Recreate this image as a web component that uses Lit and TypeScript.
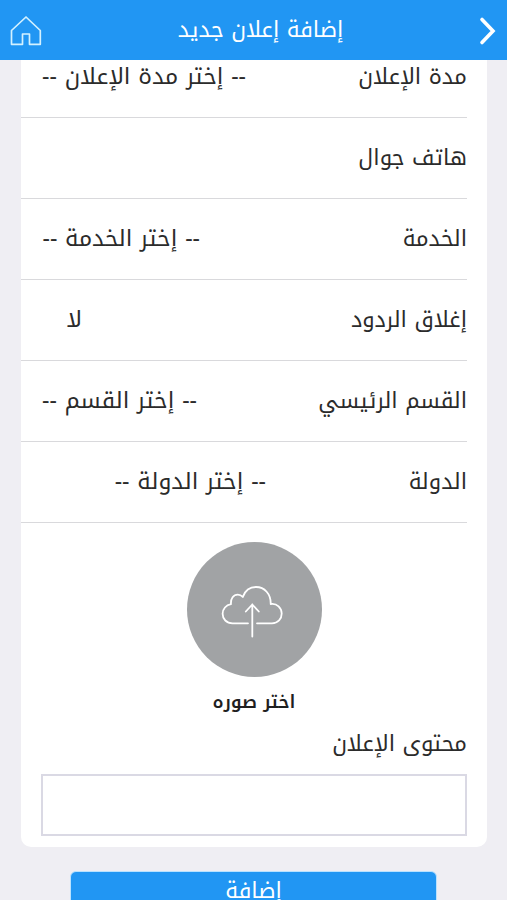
import { LitElement, html, css, nothing } from "lit";
import { customElement } from "lit/decorators.js";

interface Field {
  id: string;
  label: string;
  value?: string;
  size?: string;
}

const FIELDS: Field[] = [
  { id: "duration", label: "مدة الإعلان", value: "-- إختر مدة الإعلان --" },
  { id: "mobile", label: "هاتف جوال" },
  { id: "service", label: "الخدمة", value: "-- إختر الخدمة --" },
  { id: "replies", label: "إغلاق الردود", value: "لا", size: "short" },
  { id: "section", label: "القسم الرئيسي", value: "-- إختر القسم --" },
  { id: "country", label: "الدولة", value: "-- إختر الدولة --", size: "wide" },
];

@customElement("app-root")
export class AppRoot extends LitElement {
  static styles = css`
    :host {
      display: flex;
      flex-direction: column;
      height: 100vh;
      direction: rtl;
      background: #efeef3;
      color: #2b2b2b;
      font-family: "Noto Kufi Arabic", "Noto Sans Arabic", "DejaVu Sans", sans-serif;
      font-size: 22px;
      line-height: 40px;
    }
    * {
      box-sizing: border-box;
    }
    header {
      display: flex;
      align-items: center;
      justify-content: space-between;
      flex: none;
      height: 60px;
      padding-left: 8px;
      background: #2196f3;
      color: #fff;
    }
    h1 {
      margin: 0;
      font-size: 22px;
      font-weight: 400;
    }
    svg {
      display: block;
      fill: none;
      stroke: currentColor;
    }
    .icon {
      height: 40px;
      padding: 0;
      border: 0;
      background: none;
      color: inherit;
    }
    .home {
      color: #d3f1ff;
    }
    main {
      flex: 1;
      min-height: 0;
      overflow-y: auto;
      scrollbar-width: none;
    }
    .card {
      margin: -23px 20px 0 21px;
      padding-bottom: 11px;
      border-radius: 10px;
      background: #fff;
    }
    .row {
      display: flex;
      align-items: center;
      justify-content: space-between;
      height: 81px;
      margin-right: 20px;
      padding-left: 21px;
      border-bottom: 1px solid #d9d9dc;
    }
    select,
    .phone {
      appearance: none;
      height: 40px;
      padding: 0;
      border: 0;
      background: none;
      color: inherit;
      font: inherit;
      font-size: 23px;
    }
    .phone {
      flex: 1;
      min-width: 0;
    }
    .short {
      width: 40px;
    }
    .wide {
      width: 224px;
    }
    .upload {
      display: flex;
      flex-direction: column;
      align-items: center;
      gap: 5px;
      padding-top: 19px;
      font-size: 18px;
      font-weight: 600;
      color: #1f1f1f;
    }
    .circle {
      width: 135px;
      height: 135px;
      border-radius: 50%;
      background: #a1a3a5;
      color: #fff;
    }
    .file {
      position: absolute;
      width: 1px;
      height: 1px;
      opacity: 0;
    }
    .content {
      display: flex;
      flex-direction: column;
      gap: 10px;
      padding: 2px 20px 0;
    }
    textarea {
      display: block;
      width: 100%;
      height: 62px;
      padding: 8px;
      border: 2px solid #dad9e4;
      border-radius: 0;
      background: #fff;
      font: inherit;
      resize: none;
    }
    .actions {
      padding: 24px 70px;
    }
    .submit {
      width: 100%;
      height: 40px;
      padding: 0;
      border: 1px solid #b9e2ff;
      border-radius: 6px;
      background: #2196f3;
      color: #fff;
      font: inherit;
      line-height: 36px;
    }
  `;

  private renderField(field: Field) {
    return html`
      <div class="row">
        <label for=${field.id}>${field.label}</label>
        ${field.value
          ? html`<select id=${field.id} class=${field.size ?? nothing}>
              <option>${field.value}</option>
            </select>`
          : html`<input id=${field.id} class="phone" type="tel" />`}
      </div>
    `;
  }

  render() {
    return html`
      <header>
        <button class="icon" type="button" aria-label="رجوع">
          <svg width="30" height="40" viewBox="0 0 30 40" stroke-width="3.600">
            <path d="M5 9.500 16 21 5 32.500" stroke-linecap="round" stroke-linejoin="miter" />
          </svg>
        </button>
        <h1>إضافة إعلان جديد</h1>
        <button class="icon home" type="button" aria-label="الرئيسية">
          <svg width="36" height="40" viewBox="0 0 36 40" stroke-width="1.700">
            <path d="M3.500 20.500 18 7 32.300 20.500V34.300H21.500V24H14.500V34.300H3.500Z" stroke-linejoin="round" />
          </svg>
        </button>
      </header>
      <main>
        <form class="card">
          ${FIELDS.map((field) => this.renderField(field))}
          <label class="upload">
            <input class="file" type="file" accept="image/*" />
            <span class="circle">
              <svg width="135" height="135" viewBox="0 0 135 135" stroke-width="1.800" stroke-linecap="round" stroke-linejoin="round">
                <path d="M61 81.300H45.500C39.500 81.300 35.600 77 35.600 71.800C35.600 67 39 63 44 62.200C43.500 56.500 46.500 52.600 50.800 52.600C52.800 52.600 54.400 53.400 55.800 55C58 48.700 62.800 45 69 45C77.500 45 84 52 83.700 62C90 61 94.700 66 94.700 71.500C94.700 77 91 81.300 85 81.300H70" />
                <path d="M65.300 94.500V62.500M58.800 69.500 65.300 62.500 71.800 69.500" />
              </svg>
            </span>
            <span>اختر صوره</span>
          </label>
          <div class="content">
            <label for="content">محتوى الإعلان</label>
            <textarea id="content"></textarea>
          </div>
        </form>
        <div class="actions">
          <button class="submit" type="button">إضافة</button>
        </div>
      </main>
    `;
  }
}
